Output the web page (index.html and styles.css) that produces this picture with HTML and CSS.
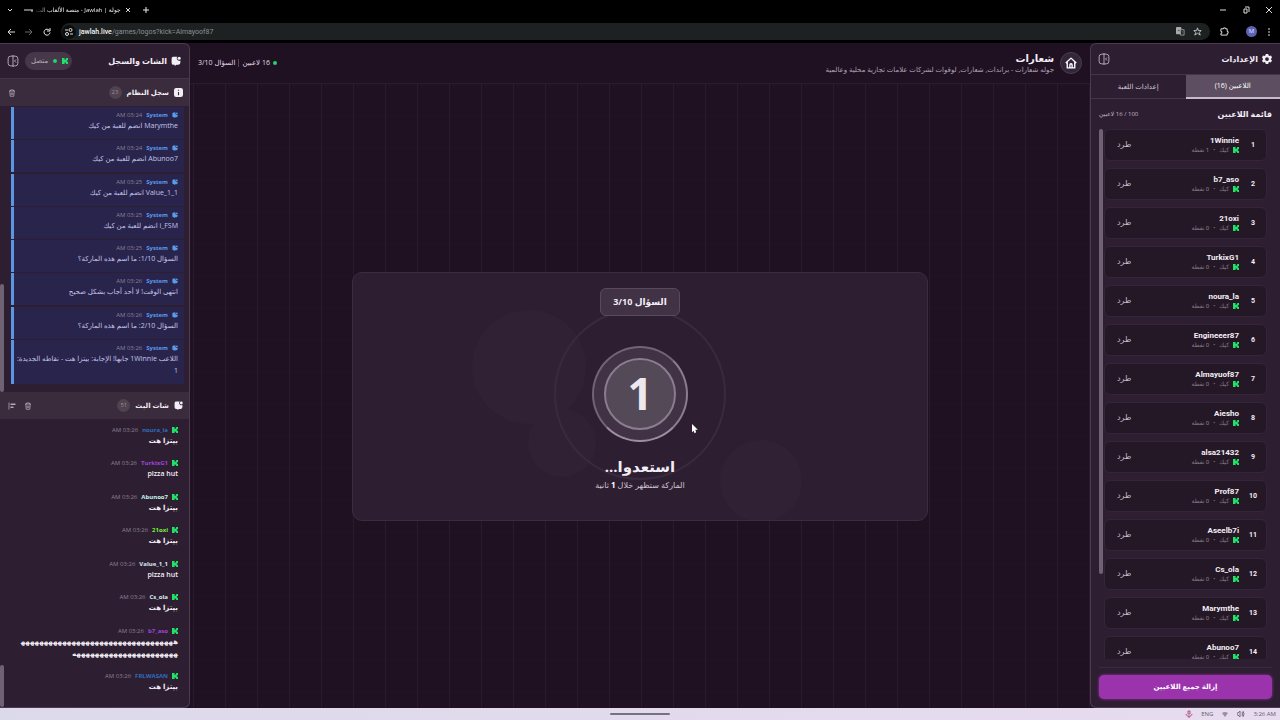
FILE: index.html
```
<!DOCTYPE html>
<html lang="ar">
<head>
    <meta charset="UTF-8">
    <meta name="viewport" content="width=device-width, initial-scale=1.0">
    <title>جولة | Jawlah - منصة الألعاب</title>
    <link rel="stylesheet" href="styles.css">
</head>
<body>
    <!-- Icons -->
    <svg class="sprite" aria-hidden="true">
        <symbol id="kick" viewBox="0 0 8 8"><path fill="currentColor" d="M0 0h3.500v2.500h1V1.500h1V0H8v3H6.500v2H8v3H5.500V6.500h-1v-1h-1V8H0z"/></symbol>
        <symbol id="chat" viewBox="0 0 16 16"><path fill="currentColor" d="M3 1h7a4 4 0 0 0 5 6v3a4 4 0 0 1-3 4H9l-3 2v-2H4a3 3 0 0 1-3-3V4a3 3 0 0 1 2-3z"/><circle cx="13" cy="3.500" r="2.500" fill="currentColor"/></symbol>
        <symbol id="info" viewBox="0 0 16 16"><rect width="16" height="16" rx="4" fill="currentColor"/><path stroke="#3a2b3d" stroke-width="2" d="M8 3v2M8 7v6"/></symbol>
        <symbol id="trash" viewBox="0 0 16 16"><path fill="none" stroke="currentColor" stroke-width="1.600" d="M2 4h12M5 4V2h6v2M3.500 4l1 10.500h7l1-10.500M6.500 7v5M9.500 7v5"/></symbol>
        <symbol id="align" viewBox="0 0 16 16"><path fill="none" stroke="currentColor" stroke-width="1.600" d="M2 1v14"/><path fill="currentColor" d="M5 3h10v3H5zM5 9h6v3H5z"/></symbol>
        <symbol id="panel" viewBox="0 0 16 16"><rect x="1.500" y="1.500" width="13" height="13" rx="3.500" fill="none" stroke="currentColor" stroke-width="1.300"/><path fill="none" stroke="currentColor" stroke-width="1.300" d="M8 0v16M12 6l-2 2 2 2"/></symbol>
        <symbol id="gear" viewBox="0 0 16 16"><path fill="currentColor" fill-rule="evenodd" d="M6 0h4l.6 2.400 1.400.8 2.400-.7 1.600 3L14.500 7.500v1.200l1.500 2-2 3-2.200-.8-1.300.8L10 16H6l-.6-2.300-1.300-.8-2.300.8-1.800-3 1.500-2V7.500L0 5.500l1.700-3 2.300.7 1.400-.8zM8 5a3 3 0 1 0 0 6 3 3 0 0 0 0-6z"/></symbol>
        <symbol id="home" viewBox="0 0 16 16"><path fill="none" stroke="currentColor" stroke-width="1.800" stroke-linejoin="round" d="M1 8l7-6.500L15 8M3 7v7.500h10V7M6.500 14v-3.500a1.500 1.500 0 0 1 3 0V14"/></symbol>
    </svg>

    <!-- Browser bar -->
    <header class="browser">
        <div class="tab-strip">
            <svg class="ico-xs" viewBox="0 0 8 8"><path d="M2 3l2 2 2-2" fill="none" stroke="#ddd"/></svg>
            <div class="tab">
                <svg class="favicon" viewBox="0 0 9 4"><path d="M0 2h2M3 1v2M4 2h2M7 1v2h2V1" fill="none" stroke="#ddd"/></svg>
                <span class="tab-title" dir="rtl">جولة | Jawlah - منصة الألعاب الت</span>
                <button class="bare" aria-label="Close tab"><svg class="ico-xs" viewBox="0 0 8 8"><path d="M2 2l4 4M6 2L2 6" stroke="#ddd"/></svg></button>
            </div>
            <button class="bare" aria-label="New tab"><svg class="ico-xs" viewBox="0 0 8 8"><path d="M4 1v6M1 4h6" stroke="#eee"/></svg></button>
            <div class="window-buttons">
                <button class="bare" aria-label="Minimize"><svg class="ico-xs" viewBox="0 0 8 8"><path d="M1 4h6" stroke="#ddd"/></svg></button>
                <button class="bare" aria-label="Restore"><svg class="ico-xs" viewBox="0 0 8 8"><path d="M2 3h3v4H2zM3 1h4v5" fill="none" stroke="#ddd"/></svg></button>
                <button class="bare" aria-label="Close"><svg class="ico-xs" viewBox="0 0 8 8"><path d="M1 1l6 6M7 1L1 7" stroke="#ddd"/></svg></button>
            </div>
        </div>
        <div class="toolbar">
            <button class="bare" aria-label="Back"><svg class="ico-xs" viewBox="0 0 8 8"><path d="M8 4H1M4 1L1 4l3 3" fill="none" stroke="#ddd"/></svg></button>
            <button class="bare" aria-label="Forward"><svg class="ico-xs" viewBox="0 0 8 8"><path d="M0 4h7M4 1l3 3-3 3" fill="none" stroke="#666"/></svg></button>
            <button class="bare" aria-label="Reload"><svg class="ico-xs" viewBox="0 0 8 8"><path d="M6.500 2.500a3 3 0 1 0 .5 2M7 0v3H4" fill="none" stroke="#eee"/></svg></button>
            <div class="address">
                <span class="site-info"><svg class="ico-xs" viewBox="0 0 8 8"><path d="M0 2h3M5 6h3" stroke="#ddd"/><circle cx="5.500" cy="2" r="1.500" fill="none" stroke="#ddd"/><circle cx="2" cy="6" r="1.500" fill="none" stroke="#ddd"/></svg></span>
                <span class="url"><b>jawlah.live</b>/games/logos?kick=Almayoof87</span>
                <svg class="ico-sm" viewBox="0 0 10 10"><rect width="6" height="8" rx="1" fill="#aaa"/><path d="M5 3h4v6H5z" fill="#222" stroke="#999"/><path d="M2 4h2M6 5h2M7 5v3" stroke="#444"/></svg>
                <svg class="ico-sm" viewBox="0 0 10 10"><path d="M5 1l1 3h3L7 6l1 3-3-2-3 2 1-3-2-2h3z" fill="none" stroke="#ccc"/></svg>
            </div>
            <div class="toolbar-end">
                <button class="bare" aria-label="Extensions"><svg class="ico-sm" viewBox="0 0 10 10"><path d="M1 2h3V1h2v1h2v3h1v2H8v2H1V7h1V5H1z" fill="none" stroke="#eee"/></svg></button>
                <button class="avatar">M</button>
                <button class="bare" aria-label="Menu"><svg class="ico-xs" viewBox="0 0 8 8"><path d="M4 0v2M4 3v2M4 6v2" stroke="#ddd"/></svg></button>
            </div>
        </div>
    </header>

    <div class="app" dir="rtl">
        <!-- Settings -->
        <aside class="panel settings">
            <div class="panel-head">
                <svg class="ico-md"><use href="#gear"/></svg>
                <h2>الإعدادات</h2>
                <button class="bare push" aria-label="إخفاء الإعدادات"><svg class="ico-lg muted"><use href="#panel"/></svg></button>
            </div>
            <nav class="tabs">
                <button class="active">اللاعبين (16)</button>
                <button>إعدادات اللعبة</button>
            </nav>
            <div class="list-head">
                <h3>قائمة اللاعبين</h3>
                <span>100 / 16 لاعبين</span>
            </div>
            <div class="players">
                <ol id="playersList"></ol>
                <div class="rail"></div>
            </div>
            <div class="panel-foot">
                <button class="remove-all">إزالة جميع اللاعبين</button>
            </div>
        </aside>

        <!-- Game -->
        <main class="stage">
            <div class="stage-head">
                <a class="home" href="#" aria-label="الرئيسية"><svg class="ico-lg"><use href="#home"/></svg></a>
                <div>
                    <h1>شعارات</h1>
                    <p>جوله شعارات - براندات, شعارات, لوقوات لشركات علامات تجارية محلية وعالمية</p>
                </div>
                <div class="status">
                    <span class="dot"></span><span>16 لاعبين</span><span class="bar"></span><span>السؤال 3/10</span>
                </div>
            </div>
            <div class="board">
                <section class="card">
                    <span class="blob blob-a"></span>
                    <span class="blob blob-b"></span>
                    <span class="blob blob-c"></span>
                    <div class="question">السؤال 3/10</div>
                    <div class="timer"><span class="halo"></span><div class="count">1</div></div>
                    <h2>استعدوا...</h2>
                    <p>الماركة ستظهر خلال <b>1</b> ثانية</p>
                    <svg class="cursor" viewBox="0 0 8 12"><path d="M1 0v10l2-2 1 3 2-1-1-3h3z" fill="#fff"/></svg>
                </section>
            </div>
        </main>

        <!-- Chat and log -->
        <aside class="panel chat">
            <div class="panel-head">
                <svg class="ico-md"><use href="#chat"/></svg>
                <h2>الشات والسجل</h2>
                <span class="connected push"><svg class="ico-2xs green"><use href="#kick"/></svg><span class="dot"></span>متصل</span>
                <button class="bare" aria-label="إخفاء الشات"><svg class="ico-lg muted"><use href="#panel"/></svg></button>
            </div>
            <div class="section-head">
                <svg class="ico-sm"><use href="#info"/></svg>
                <h3>سجل النظام</h3>
                <span class="badge">23</span>
                <button class="bare push" aria-label="مسح السجل"><svg class="ico-xs muted"><use href="#trash"/></svg></button>
            </div>
            <div class="log">
                <ul id="systemLog"></ul>
                <div class="rail"></div>
            </div>
            <div class="section-head">
                <svg class="ico-sm"><use href="#chat"/></svg>
                <h3>شات البث</h3>
                <span class="badge">51</span>
                <div class="actions push">
                    <button class="bare" aria-label="مسح الشات"><svg class="ico-xs muted"><use href="#trash"/></svg></button>
                    <button class="bare" aria-label="محاذاة"><svg class="ico-xs muted"><use href="#align"/></svg></button>
                </div>
            </div>
            <div class="stream">
                <ul id="streamChat"></ul>
                <div class="rail"></div>
            </div>
        </aside>
    </div>

    <footer class="taskbar">
        <span class="handle"></span>
        <div class="tray">
            <svg class="ico-xs" viewBox="0 0 8 8"><path d="M3 1h2v3H3zM1 4c0 3 6 3 6 0M4 6v2" fill="none" stroke="#b04f86"/></svg>
            <span>ENG</span>
            <svg class="ico-xs" viewBox="0 0 8 8"><path d="M1 3q3-2 6 0L4 7z" fill="#98909f"/></svg>
            <svg class="ico-xs" viewBox="0 0 8 8"><path d="M0 3h1l2-2v6L1 5H0zM5 2q1 2 0 4M6 1q2 3 0 6" fill="none" stroke="#777080"/></svg>
            <span>3:26 AM</span>
        </div>
    </footer>

    <script>
        const players = ['1Winnie', 'b7_aso', '21oxi', 'TurkixG1', 'noura_la', 'Engineeer87', 'Almayuof87', 'Aiesho',
            'alsa21432', 'Prof87', 'Aseelb7i', 'Cs_ola', 'Marymthe', 'Abunoo7'];

        const systemLog = [
            { time: '03:24', text: 'Marymthe انضم للعبة من كيك' },
            { time: '03:24', text: 'Abunoo7 انضم للعبة من كيك' },
            { time: '03:25', text: 'Value_1_1 انضم للعبة من كيك' },
            { time: '03:25', text: 'i_FSM انضم للعبة من كيك' },
            { time: '03:25', text: 'السؤال 1/10: ما اسم هذه الماركة؟' },
            { time: '03:26', text: 'انتهى الوقت! لا أحد أجاب بشكل صحيح' },
            { time: '03:26', text: 'السؤال 2/10: ما اسم هذه الماركة؟' },
            { time: '03:26', text: 'اللاعب 1Winnie جابها! الإجابة: بيتزا هت - نقاطه الجديدة: 1' },
        ];

        const streamChat = [
            { name: 'noura_la', color: 'blue', text: 'بيتزا هت' },
            { name: 'TurkixG1', color: 'purple', text: 'pizza hut' },
            { name: 'Abunoo7', color: 'mint', text: 'بيتزا هت' },
            { name: '21oxi', color: 'lime', text: 'بيتزا هت' },
            { name: 'Value_1_1', color: 'ice', text: 'pizza hut' },
            { name: 'Cs_ola', color: 'ice', text: 'بيتزا هت' },
            { name: 'b7_aso', color: 'purple', text: 'ه'.repeat(57) },
            { name: 'FRLWASAN', color: 'blue', text: 'بيتزا هت' },
        ];

        // Players list
        document.getElementById('playersList').innerHTML = players.map((name, i) => `
            <li>
                <span class="rank">${i + 1}</span>
                <div class="who">
                    <b>${name}</b>
                    <small><svg class="ico-2xs green"><use href="#kick"/></svg>كيك <i>•</i> ${i === 0 ? 1 : 0} نقطة</small>
                </div>
                <button class="bare kick-out">طرد</button>
            </li>`).join('');

        // System log
        document.getElementById('systemLog').innerHTML = systemLog.map(row => `
            <li>
                <div class="meta"><svg class="ico-2xs"><use href="#chat"/></svg><b>System</b><time>${row.time} AM</time></div>
                <p>${row.text}</p>
            </li>`).join('');

        // Stream chat
        document.getElementById('streamChat').innerHTML = streamChat.map(row => `
            <li>
                <div class="meta"><svg class="ico-2xs green"><use href="#kick"/></svg><b class="${row.color}">${row.name}</b><time>03:26 AM</time></div>
                <p>${row.text}</p>
            </li>`).join('');
    </script>
</body>
</html>
```
FILE: styles.css
```
* {
    box-sizing: border-box;
}
body {
    margin: 0;
    height: 100vh;
    display: flex;
    flex-direction: column;
    overflow: hidden;
    background: #000;
    color: #f3eef5;
    font-family: 'Open Sans', 'DejaVu Sans', sans-serif;
    font-size: 7px;
    line-height: 10px;
}
h1, h2, h3, p, ul, ol {
    margin: 0;
    padding: 0;
    list-style: none;
}
svg {
    display: block;
    flex: none;
}
button {
    font: inherit;
    color: inherit;
    cursor: pointer;
    border: none;
}
.bare {
    background: none;
    padding: 0;
}
.push {
    margin-inline-start: auto;
}
.sprite {
    position: absolute;
    width: 0;
    height: 0;
}
.ico-2xs { width: 6px; height: 6px; }
.ico-xs { width: 8px; height: 8px; }
.ico-sm { width: 9px; height: 9px; }
.ico-md { width: 10px; height: 10px; }
.ico-lg { width: 12px; height: 12px; }
.muted { color: #b3a8b8; }
.green { color: #1fe467; }
.dot {
    width: 4px;
    height: 4px;
    border-radius: 50%;
    background: #23d36b;
}

/* Browser */
.browser {
    flex: none;
    height: 43px;
    background: #000;
}
.tab-strip {
    display: flex;
    align-items: center;
    height: 20px;
    padding: 0 7px 0 6px;
    gap: 10px;
}
.tab {
    display: flex;
    align-items: center;
    gap: 3px;
}
.favicon {
    width: 9px;
    height: 4px;
}
.tab-title {
    white-space: nowrap;
    font-size: 6px;
    -webkit-mask-image: linear-gradient(to right, #0003, #000 16px);
    mask-image: linear-gradient(to right, #0003, #000 16px);
}
.window-buttons {
    display: flex;
    gap: 15px;
    margin-left: auto;
}
.toolbar {
    display: flex;
    align-items: center;
    height: 23px;
    padding: 0 7px;
    gap: 10px;
}
.address {
    flex: 1;
    display: flex;
    align-items: center;
    gap: 8px;
    height: 17px;
    padding: 0 8px 0 1px;
    border-radius: 9px;
    background: #1e2122;
}
.site-info {
    display: flex;
    align-items: center;
    justify-content: center;
    width: 14px;
    height: 14px;
    margin-right: -5px;
    border-radius: 50%;
    background: #0c0d0e;
}
.url {
    flex: 1;
    color: #8d9092;
    font-family: Roboto, sans-serif;
    font-size: 7px;
}
.url b {
    color: #f4f4f4;
    font-weight: 500;
}
.toolbar-end {
    display: flex;
    align-items: center;
    gap: 8px;
}
.avatar {
    width: 11px;
    height: 11px;
    margin-left: 9px;
    padding: 0;
    border-radius: 50%;
    background: #5c62b4;
    color: #e5e5ff;
    font-size: 6px;
    line-height: 11px;
}

/* Layout */
.app {
    flex: 1;
    min-height: 0;
    display: flex;
    background: #1f1022;
}
.panel {
    flex: none;
    width: 190px;
    min-height: 0;
    display: flex;
    flex-direction: column;
    background: #2d1f31;
    border: 1px solid #4c3b50;
}
.settings {
    border-right: none;
    border-radius: 6px 0 0 6px;
    overflow: hidden;
}
.chat {
    border-left: none;
    border-radius: 0 6px 6px 0;
    overflow: hidden;
}
.panel-head {
    flex: none;
    display: flex;
    align-items: center;
    gap: 4px;
    height: 31px;
    padding: 0 8px 0 7px;
    border-bottom: 1px solid #44354a;
}
.panel-head h2 {
    font-size: 8px;
    line-height: 14px;
}

/* Settings panel */
.tabs {
    flex: none;
    display: flex;
    height: 24px;
}
.tabs button {
    flex: 1;
    padding: 0;
    background: none;
    border-bottom: 1px solid #44354a;
    color: #d4cad8;
    font-size: 7px;
}
.tabs .active {
    background: #5d4f61;
    border-bottom: 2px solid #c6bcc9;
    color: #fff;
}
.list-head {
    flex: none;
    display: flex;
    align-items: center;
    justify-content: space-between;
    height: 30px;
    padding: 0 8px;
}
.list-head h3 {
    font-size: 8px;
}
.list-head span {
    color: #c2b6c6;
    font-size: 6px;
}
.players {
    flex: 1;
    min-height: 0;
    display: flex;
    overflow: hidden;
    padding: 0 13px 0 8px;
    gap: 1px;
}
.players ol {
    flex: 1;
    display: flex;
    flex-direction: column;
    gap: 7px;
}
.rail {
    flex: none;
    width: 4px;
    border-radius: 2px;
    background: #6f6274;
}
.players .rail {
    height: 84%;
}
.players li {
    flex: none;
    display: flex;
    align-items: center;
    height: 32px;
    padding: 0 6px 0 12px;
    border: 1px solid #34253a;
    border-radius: 6px;
    background: #251826;
    font-family: Roboto, 'DejaVu Sans', sans-serif;
}
.rank {
    width: 14px;
    text-align: center;
    font-weight: 700;
    font-size: 7px;
}
.who {
    flex: 1;
    padding-right: 7px;
}
.who b {
    display: block;
    font-size: 8px;
    font-weight: 700;
}
.who small {
    display: flex;
    align-items: center;
    gap: 4px;
    color: #85798a;
    font-size: 6px;
    line-height: 8px;
}
.who i {
    font-style: normal;
}
.kick-out {
    color: #c8bccc;
    font-size: 8px;
}
.panel-foot {
    flex: none;
    margin: 8px 8px 0;
    padding: 7px 0 8px;
    border-top: 1px solid #3a2b3e;
}
.remove-all {
    width: 100%;
    height: 24px;
    padding: 0;
    border-radius: 5px;
    background: #9b33ad;
    color: #fff;
    font-weight: 600;
    box-shadow: 0 0 3px #9b33ad;
}

/* Stage */
.stage {
    flex: 1;
    min-width: 0;
    display: flex;
    flex-direction: column;
}
.stage-head {
    flex: none;
    display: flex;
    align-items: center;
    gap: 6px;
    height: 41px;
    padding: 0 8px;
    border-bottom: 1px solid #2b1b2f;
}
.home {
    display: flex;
    align-items: center;
    justify-content: center;
    width: 22px;
    height: 22px;
    border: 1px solid #4b3d4f;
    border-radius: 50%;
    background: #34263a;
    color: #fff;
}
.stage-head h1 {
    font-size: 10px;
    line-height: 14px;
}
.stage-head p {
    color: #b0a4b4;
}
.status {
    display: flex;
    align-items: center;
    gap: 3px;
    margin-right: auto;
    color: #e4dce8;
}
.bar {
    width: 1px;
    height: 8px;
    background: #52435a;
}
.board {
    flex: 1;
    min-height: 0;
    display: flex;
    align-items: center;
    justify-content: center;
    background-image:
        linear-gradient(to right, #291a2d 1px, transparent 1px),
        linear-gradient(to bottom, #211224 1px, transparent 1px);
    background-size: 32px 32px;
    background-position: 3px 0;
}
.card {
    position: relative;
    display: flex;
    flex-direction: column;
    align-items: center;
    width: 64%;
    padding: 15px 16px 30px;
    border: 1px solid #3b2c40;
    border-radius: 10px;
    background: #2d1f31;
    overflow: hidden;
}
.blob {
    position: absolute;
    border-radius: 50%;
    background: #302234;
}
.blob-a {
    width: 114px;
    height: 114px;
    left: calc(50% - 168px);
    top: 37px;
}
.blob-b {
    width: 82px;
    height: 82px;
    left: calc(50% + 80px);
    top: 167px;
}
.blob-c {
    width: 68px;
    height: 68px;
    left: calc(50% - 112px);
    top: 136px;
}
.question {
    position: relative;
    z-index: 1;
    padding: 6px 12px;
    border: 1px solid #5a4a5f;
    border-radius: 6px;
    background: #413245;
    font-size: 9px;
    font-weight: 700;
    line-height: 14px;
}
.timer {
    position: relative;
    display: flex;
    align-items: center;
    justify-content: center;
    width: 96px;
    height: 96px;
    margin: 30px 0 14px;
    border: 2px solid #726376;
    border-right-color: #8c7d90;
    border-bottom-color: #9d8da1;
    border-radius: 50%;
    background: #413345;
}
.halo {
    position: absolute;
    inset: -40px;
    border: 2px solid #392b3d;
    border-radius: 50%;
}
.count {
    width: 72px;
    height: 72px;
    border: 2px solid #8b7c8f;
    border-radius: 50%;
    background: #534957;
    color: #ece8ee;
    font-size: 44px;
    font-weight: 700;
    line-height: 66px;
    text-align: center;
}
.card h2 {
    position: relative;
    font-size: 15px;
    line-height: 20px;
}
.card p {
    position: relative;
    margin-top: 4px;
    color: #d0c5d4;
    font-size: 8px;
}
.card b {
    color: #fff;
}
.cursor {
    position: absolute;
    left: calc(50% + 51px);
    top: 151px;
    width: 7px;
    height: 10px;
}

/* Chat panel */
.chat .panel-head {
    height: 35px;
}
.connected {
    display: flex;
    align-items: center;
    gap: 5px;
    height: 18px;
    margin-left: 2px;
    padding: 0 4px 0 6px;
    border-radius: 9px;
    background: #46384a;
    color: #b9aebd;
}
.section-head {
    flex: none;
    display: flex;
    align-items: center;
    gap: 5px;
    height: 27px;
    padding: 0 6px 0 8px;
    background: #3a2b3d;
}
.section-head h3 {
    font-size: 7px;
}
.actions {
    display: flex;
    gap: 8px;
}
.badge {
    min-width: 13px;
    height: 13px;
    border-radius: 7px;
    background: #50424f;
    color: #998d9d;
    font-size: 6px;
    line-height: 13px;
    text-align: center;
}
.log, .stream {
    display: flex;
    align-items: flex-end;
    justify-content: space-between;
}
.log {
    flex: none;
    height: 286px;
}
.stream {
    flex: 1;
    min-height: 0;
}
.log ul, .stream ul {
    align-self: stretch;
    width: 100%;
    display: flex;
    flex-direction: column;
    justify-content: space-between;
}
.log ul {
    padding: 1px 5px 8px 7px;
}
.stream ul {
    padding: 6px 5px 14px 7px;
}
.stream li {
    padding: 0 6px;
}
.log li {
    padding: 3px 6px 7px 1px;
    border-left: 3px solid #5a96e3;
    background: #29244b;
    color: #c3c5ec;
}
.log .rail {
    height: 108px;
}
.stream .rail {
    height: 42px;
}
.meta {
    display: flex;
    align-items: center;
    gap: 4px;
    font-size: 6px;
    color: #5a9bea;
}
.meta time {
    color: #8b8094;
}
.log p, .stream p {
    font-size: 7px;
    line-height: 12px;
    overflow-wrap: anywhere;
}
.stream p {
    font-weight: 600;
}
.blue { color: #2e6ebd; }
.purple { color: #a045d6; }
.mint { color: #c5f5ec; }
.lime { color: #78f03c; }
.ice { color: #dcecf8; }

/* Taskbar */
.taskbar {
    flex: none;
    display: grid;
    grid-template-columns: 1fr 60px 1fr;
    align-items: center;
    height: 12px;
    padding: 0 4px;
    background: linear-gradient(to right, #dcdaea, #e8dbef);
    color: #665c6c;
}
.handle {
    grid-column: 2;
    height: 2px;
    border-radius: 1px;
    background: #77717f;
}
.tray {
    display: flex;
    align-items: center;
    justify-content: flex-end;
    gap: 8px;
    font-size: 6px;
}
```
